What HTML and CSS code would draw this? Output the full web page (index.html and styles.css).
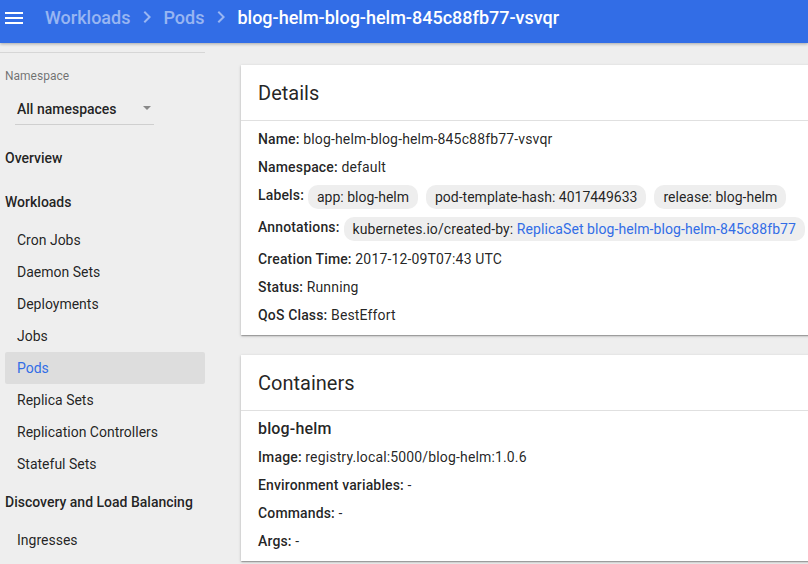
FILE: index.html
```html
<!DOCTYPE html>
<html>
<head>
<meta charset="utf-8">
<link rel="stylesheet" href="styles.css">
</head>
<body>
<header class="toolbar">
  <svg class="menu-icon" width="18" height="12" viewBox="0 0 18 12"><rect x="0" y="0" width="18" height="2" fill="#fff"/><rect x="0" y="5" width="18" height="2" fill="#fff"/><rect x="0" y="10" width="18" height="2" fill="#fff"/></svg>
  <nav class="crumbs">
    <span class="crumb">Workloads</span>
    <svg class="chev" width="24" height="24" viewBox="0 0 24 24"><path d="M10 6 8.59 7.41 13.17 12l-4.58 4.59L10 18l6-6z" fill="rgba(255,255,255,0.5)"/></svg>
    <span class="crumb">Pods</span>
    <svg class="chev" width="24" height="24" viewBox="0 0 24 24"><path d="M10 6 8.59 7.41 13.17 12l-4.58 4.59L10 18l6-6z" fill="rgba(255,255,255,0.5)"/></svg>
    <span class="crumb current">blog-helm-blog-helm-845c88fb77-vsvqr</span>
  </nav>
</header>
<div class="layout">
  <aside class="sidebar">
    <div class="side-divider"></div>
    <div class="ns-label">Namespace</div>
    <div class="ns-select"><span>All namespaces</span><span class="arrow"></span></div>
    <div class="nav-head">Overview</div>
    <div class="nav-head">Workloads</div>
    <div class="nav-item">Cron Jobs</div>
    <div class="nav-item">Daemon Sets</div>
    <div class="nav-item">Deployments</div>
    <div class="nav-item">Jobs</div>
    <div class="nav-item active">Pods</div>
    <div class="nav-item">Replica Sets</div>
    <div class="nav-item">Replication Controllers</div>
    <div class="nav-item">Stateful Sets</div>
    <div class="nav-head">Discovery and Load Balancing</div>
    <div class="nav-item">Ingresses</div>
  </aside>
  <main class="main">
    <section class="card">
      <div class="card-title">Details</div>
      <div class="card-body">
        <div class="row"><span class="key">Name:</span>&nbsp;<span>blog-helm-blog-helm-845c88fb77-vsvqr</span></div>
        <div class="row"><span class="key">Namespace:</span>&nbsp;<span>default</span></div>
        <div class="row"><span class="key">Labels:</span>
          <div class="chips">
            <span class="chip">app: blog-helm</span>
            <span class="chip">pod-template-hash: 4017449633</span>
            <span class="chip">release: blog-helm</span>
          </div>
        </div>
        <div class="row"><span class="key">Annotations:</span>
          <div class="chips">
            <span class="chip wide">kubernetes.io/created-by: <span class="link">ReplicaSet blog-helm-blog-helm-845c88fb77</span></span>
          </div>
        </div>
        <div class="row"><span class="key">Creation Time:</span>&nbsp;<span>2017-12-09T07:43 UTC</span></div>
        <div class="row"><span class="key">Status:</span>&nbsp;<span>Running</span></div>
        <div class="row"><span class="key">QoS Class:</span>&nbsp;<span>BestEffort</span></div>
      </div>
    </section>
    <section class="card">
      <div class="card-title">Containers</div>
      <div class="card-body">
        <div class="container-name">blog-helm</div>
        <div class="row"><span class="key">Image:</span>&nbsp;<span>registry.local:5000/blog-helm:1.0.6</span></div>
        <div class="row"><span class="key">Environment variables:</span>&nbsp;<span>-</span></div>
        <div class="row"><span class="key">Commands:</span>&nbsp;<span>-</span></div>
        <div class="row"><span class="key">Args:</span>&nbsp;<span>-</span></div>
      </div>
    </section>
  </main>
</div>
</body>
</html>
```
FILE: styles.css
```css
html, body {
  margin: 0;
  height: 100%;
  overflow: hidden;
}
body {
  background: #eeeeee;
  font-family: Roboto, "Noto Sans", sans-serif;
  color: rgba(0, 0, 0, 0.87);
  font-size: 14px;
}
.toolbar {
  height: 43px;
  box-sizing: border-box;
  padding-bottom: 9px;
  background: #326de6;
  display: flex;
  align-items: center;
  box-shadow: 0 1px 3px rgba(0, 0, 0, 0.3);
  position: relative;
  z-index: 2;
}
.menu-icon {
  margin-left: 5px;
  margin-top: 1px;
  flex: none;
}
.crumbs {
  display: flex;
  align-items: center;
  margin-left: 22px;
}
.crumb {
  font-size: 18px;
  font-weight: 500;
  color: rgba(255, 255, 255, 0.5);
  white-space: nowrap;
}
.crumb.current {
  color: #fff;
}
.chev {
  margin: 0 4px 0 5px;
  flex: none;
}
.layout {
  display: flex;
}
.sidebar {
  width: 205px;
  flex: none;
}
.side-divider {
  margin-top: 9px;
  border-top: 1px solid #d6d6d6;
}
.ns-label {
  margin-top: 16px;
  padding-left: 5px;
  font-size: 12px;
  line-height: 14px;
  color: rgba(0, 0, 0, 0.54);
}
.ns-select {
  margin: 16px 0 0 15px;
  width: 139px;
  display: flex;
  align-items: center;
  justify-content: space-between;
  padding: 0 3px 5px 2px;
  box-sizing: border-box;
  border-bottom: 1px solid #cfcfcf;
  font-weight: 500;
  line-height: 20px;
}
.arrow {
  width: 0;
  height: 0;
  border-left: 4px solid transparent;
  border-right: 4px solid transparent;
  border-top: 4px solid #888;
  margin-bottom: 2px;
}
.nav-head {
  height: 44px;
  line-height: 44px;
  padding-left: 5px;
  font-weight: 500;
}
.ns-select + .nav-head {
  margin-top: 11px;
}
.nav-item {
  height: 32px;
  line-height: 32px;
  margin-left: 5px;
  padding-left: 12px;
  border-radius: 2px;
}
.nav-item.active {
  background: #dddddd;
  color: #326de6;
}
.main {
  flex: none;
  width: 620px;
  padding: 22px 0 0 36px;
}
.card {
  background: #fff;
  box-shadow: 0 1px 3px 0 rgba(0, 0, 0, 0.2), 0 1px 1px 0 rgba(0, 0, 0, 0.14), 0 2px 1px -1px rgba(0, 0, 0, 0.12);
  margin-bottom: 20px;
}
.card-title {
  height: 55px;
  line-height: 56px;
  padding-left: 17px;
  font-size: 20px;
  border-bottom: 1px solid #e0e0e0;
}
.card-body {
  padding: 4px 17px 6px;
  letter-spacing: 0.15px;
}
.row {
  display: flex;
  align-items: flex-start;
  line-height: 28px;
  white-space: nowrap;
}
.key {
  font-weight: 500;
}
.chips {
  display: flex;
  gap: 8px;
  margin-left: 4px;
}
.chip {
  display: inline-block;
  height: 24px;
  line-height: 24px;
  margin: 4px 0;
  padding: 0 9px;
  border-radius: 10px;
  background: #eeeeee;
  letter-spacing: 0;
}
.chip.wide {
  letter-spacing: 0.08px;
}
.link {
  color: #326de6;
}
.container-name {
  font-size: 16px;
  font-weight: 500;
  line-height: 28px;
}
```
